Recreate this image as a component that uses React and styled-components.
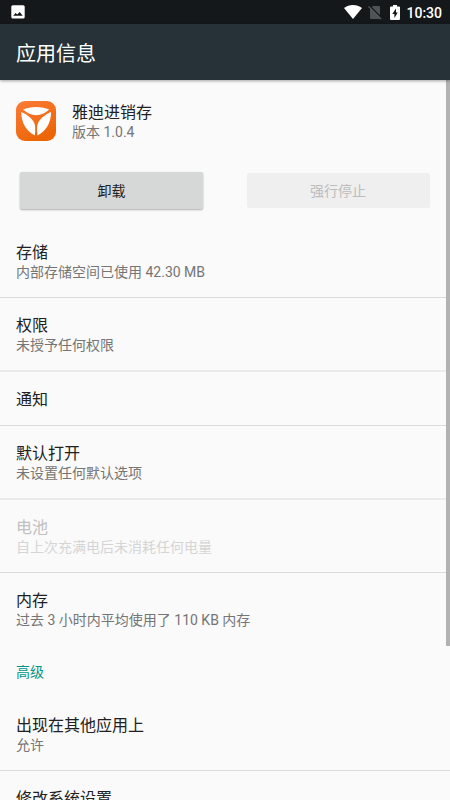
import React, {Component} from 'react';
import styled, {createGlobalStyle} from "styled-components";

const GlobalStyle = createGlobalStyle`
  body {
    margin: 0;
    background: #fafafa;
    overflow: hidden;
    font-family: Roboto, "Noto Sans CJK SC", sans-serif;
  }
`;

const rows = [
  {title: "存储", summary: "内部存储空间已使用 42.30 MB"},
  {title: "权限", summary: "未授予任何权限", height: 74, soft: true},
  {title: "通知", height: 54},
  {title: "默认打开", summary: "未设置任何默认选项", height: 74, soft: true},
  {title: "电池", summary: "自上次充满电后未消耗任何电量", disabled: true},
  {title: "内存", summary: "过去 3 小时内平均使用了 110 KB 内存", last: true}
];

const advancedRows = [
  {title: "出现在其他应用上", summary: "允许"},
  {title: "修改系统设置", summary: "允许"}
];

const PictureIcon = () => (
  <svg width="14" height="14" viewBox="0 0 14 14">
    <rect x="0.3" y="0.2" width="13.4" height="13.4" rx="1.5" fill="#fff"/>
    <path d="M2.2 10.8 L4.6 8 L6.2 9.6 L8.7 6.9 L11.8 10.8 Z" fill="#14181b"/>
  </svg>
);

const WifiIcon = () => (
  <svg width="18" height="14" viewBox="0 0 18 14">
    <path d="M9 14 L0 3 C5 -1 13 -1 18 3 Z" fill="#fff"/>
  </svg>
);

const NoSimIcon = () => (
  <svg width="14" height="15" viewBox="0 0 14 15">
    <path d="M5 1 H11 Q12 1 12 2 V13 Q12 14 11 14 H3 Q2 14 2 13 V4 Z" fill="#505356"/>
    <path d="M1.2 0.6 L14 13.4" stroke="#14181b" strokeWidth="1.6"/>
    <path d="M0.5 1.4 L13.2 14.1" stroke="#5b5e60" strokeWidth="1.3"/>
  </svg>
);

const BatteryIcon = () => (
  <svg width="10" height="15" viewBox="0 0 10 15">
    <path d="M3 0 H7 V1.5 H9 Q10 1.5 10 2.5 V14 Q10 15 9 15 H1 Q0 15 0 14 V2.5 Q0 1.5 1 1.5 H3 Z" fill="#fff"/>
    <path d="M6 3.5 L2.3 9 H4.4 V13 L7.8 7.4 H6 Z" fill="#14181b"/>
  </svg>
);

const AppLogo = () => (
  <svg width="40" height="40" viewBox="0 0 40 40">
    <defs>
      <linearGradient id="logo" x1="0" y1="0" x2="0.5" y2="1">
        <stop offset="0" stopColor="#fb7b38"/>
        <stop offset="1" stopColor="#ec6608"/>
      </linearGradient>
    </defs>
    <rect width="40" height="40" rx="9" fill="url(#logo)"/>
    <path d="M7.2 8.6 C14 5.2 26 5.2 33.2 8.6 C29 12.4 25 14.2 20.2 14.2 C15.4 14.2 11.4 12.4 7.2 8.6 Z" fill="#fff"/>
    <path d="M5.3 11 C11 13.5 17.5 18 18.9 24 C19.5 27 19.2 31 18.8 34.5 C11 30.5 5 22 5.3 11 Z" fill="#fff"/>
    <path d="M35 11 C29.3 13.5 22.8 18 21.4 24 C20.8 27 21.1 31 21.5 34.5 C29.3 30.5 35.3 22 35 11 Z" fill="#fff"/>
  </svg>
);

const SettingRow = ({title, summary, height, soft, disabled, last}) => (
  <Row $height={height} $soft={soft} $disabled={disabled} $last={last}>
    <RowTitle>{title}</RowTitle>
    {summary && <Summary>{summary}</Summary>}
  </Row>
);

class App extends Component {
  render() {
    return (
      <Screen>
        <GlobalStyle/>
        <StatusBar>
          <PictureIcon/>
          <StatusIcons>
            <WifiIcon/>
            <NoSimIcon/>
            <BatteryIcon/>
            <Clock>10:30</Clock>
          </StatusIcons>
        </StatusBar>
        <Toolbar>应用信息</Toolbar>
        <Content>
          <AppHeader>
            <AppLogo/>
            <AppName>
              <RowTitle>雅迪进销存</RowTitle>
              <Summary>版本 1.0.4</Summary>
            </AppName>
          </AppHeader>
          <Actions>
            <ActionButton>卸载</ActionButton>
            <ActionButton disabled>强行停止</ActionButton>
          </Actions>
          {rows.map(row => <SettingRow key={row.title} {...row}/>)}
          <Category>高级</Category>
          {advancedRows.map(row => <SettingRow key={row.title} {...row}/>)}
          <Scrollbar/>
        </Content>
      </Screen>
    );
  }
}

const Screen = styled.div`
  display: flex;
  flex-direction: column;
  width: 450px;
  height: 800px;
  overflow: hidden;
  background: #fafafa;
  color: #212121;
`;

const StatusBar = styled.div`
  display: flex;
  align-items: center;
  justify-content: space-between;
  flex: none;
  box-sizing: border-box;
  height: 24px;
  padding: 0 8px 0 11px;
  background: #14181b;
`;

const StatusIcons = styled.div`
  display: flex;
  align-items: center;

  svg + svg {
    margin-left: 6px;
  }

  svg + svg + svg {
    margin-left: 8px;
  }
`;

const Clock = styled.span`
  margin-left: 6px;
  padding-top: 2px;
  color: #fff;
  font-size: 14px;
  font-weight: 500;
  line-height: 22px;
`;

const Toolbar = styled.header`
  display: flex;
  align-items: center;
  flex: none;
  position: relative;
  z-index: 1;
  height: 56px;
  padding-left: 16px;
  background: #263238;
  box-shadow: 0 1px 3px rgba(0, 0, 0, 0.35);
  color: #fff;
  font-size: 20px;
`;

const Content = styled.main`
  position: relative;
  flex: 1;
  min-height: 0;
  overflow: hidden;
`;

const AppHeader = styled.section`
  display: flex;
  align-items: center;
  gap: 16px;
  height: 82px;
  padding-left: 16px;
`;

const AppName = styled.div`
  padding-top: 2px;
`;

const Actions = styled.div`
  display: grid;
  grid-template-columns: 183px 183px;
  column-gap: 43.5px;
  padding: 10px 20px 16px;
`;

const ActionButton = styled.button`
  height: 37px;
  padding: 0 0 2px;
  border: 0;
  border-radius: 2px;
  background: #d6d7d7;
  box-shadow: 0 1px 2px rgba(0, 0, 0, 0.3);
  color: #212121;
  font-family: inherit;
  font-size: 14px;
  font-weight: 400;

  &:disabled {
    height: 35px;
    margin-top: 1px;
    background: #efefef;
    box-shadow: none;
    color: #bcbcbc;
  }
`;

const Row = styled.div`
  box-sizing: border-box;
  height: ${props => props.$height || 73}px;
  padding: 17px 16px 0;
  border-bottom: ${props => props.$soft ? "2px solid #ebebeb" : "1px solid #dadada"};
  ${props => props.$last && "border-bottom-color: transparent;"}
  color: ${props => props.$disabled ? "#c0c0c0" : "#212121"};

  p {
    color: ${props => props.$disabled ? "#d5d5d5" : "#757575"};
  }
`;

const RowTitle = styled.div`
  font-size: 16px;
  line-height: 22px;
`;

const Summary = styled.p`
  margin: -1px 0 0;
  color: #757575;
  font-size: 14px;
  line-height: 19px;
`;

const Category = styled.h2`
  margin: 0;
  padding-left: 16px;
  color: #009688;
  font-size: 14px;
  font-weight: 400;
  line-height: 52px;
`;

const Scrollbar = styled.div`
  position: absolute;
  top: 0;
  right: 0;
  width: 4px;
  height: 565.5px;
  background: #b2b2b2;
`;

export default App;
